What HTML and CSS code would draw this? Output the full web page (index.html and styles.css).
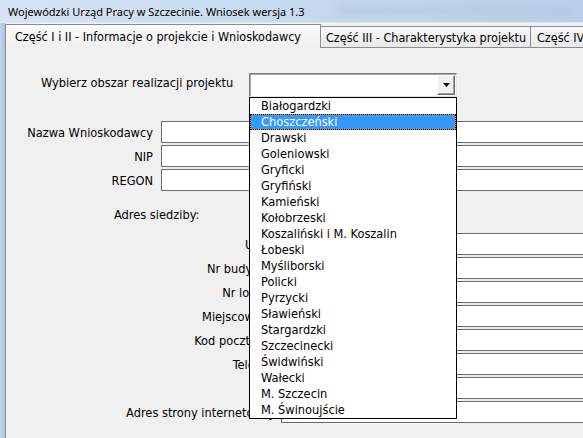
FILE: index.html
```html
<!DOCTYPE html>
<html lang="pl">
<head>
<meta charset="utf-8">
<title>Wniosek</title>
<link rel="stylesheet" href="styles.css">
</head>
<body>
<div class="titlebar"><span class="title">Wojewódzki Urząd Pracy w Szczecinie. Wniosek wersja 1.3</span><span class="glass"></span></div>
<div class="window">
  <div class="frame"></div>
  <div class="client">
    <div class="tabs">
      <div class="tab active">Część I i II - Informacje o projekcie i Wnioskodawcy</div>
      <div class="tab second">Część III - Charakterystyka projektu</div>
      <div class="tab">Część IV - Harmonogram</div>
    </div>
    <div class="panel">
      <div class="area-row">
        <span class="area-label">Wybierz obszar realizacji projektu</span>
        <div class="combo">
          <div class="combo-field"></div>
          <div class="combo-btn"><svg width="7" height="4" viewBox="0 0 7 4"><path d="M0 0H7L3.5 4Z" fill="#000"/></svg></div>
          <ul class="dropdown">
            <li>Białogardzki</li>
            <li class="selected">Choszczeński</li>
            <li>Drawski</li>
            <li>Goleniowski</li>
            <li>Gryficki</li>
            <li>Gryfiński</li>
            <li>Kamieński</li>
            <li>Kołobrzeski</li>
            <li>Koszaliński i M. Koszalin</li>
            <li>Łobeski</li>
            <li>Myśliborski</li>
            <li>Policki</li>
            <li>Pyrzycki</li>
            <li>Sławieński</li>
            <li>Stargardzki</li>
            <li>Szczecinecki</li>
            <li>Świdwiński</li>
            <li>Wałecki</li>
            <li>M. Szczecin</li>
            <li>M. Świnoujście</li>
          </ul>
        </div>
      </div>
      <div class="fields fields-a">
        <span class="lbl">Nazwa Wnioskodawcy</span><div class="txt"></div>
        <span class="lbl">NIP</span><div class="txt"></div>
        <span class="lbl">REGON</span><div class="txt"></div>
      </div>
      <div class="section-title">Adres siedziby:</div>
      <div class="fields fields-b">
        <span class="lbl">Ulica</span><div class="txt"></div>
        <span class="lbl">Nr budynku</span><div class="txt"></div>
        <span class="lbl">Nr lokalu</span><div class="txt"></div>
        <span class="lbl">Miejscowość</span><div class="txt"></div>
        <span class="lbl">Kod pocztowy</span><div class="txt"></div>
        <span class="lbl">Telefon</span><div class="txt"></div>
        <span class="lbl">Fax</span><div class="txt"></div>
        <span class="lbl">Adres strony internetowej</span><div class="txt"></div>
      </div>
    </div>
  </div>
</div>
</body>
</html>
```
FILE: styles.css
```css
* { box-sizing: border-box; }
html, body { margin: 0; padding: 0; }
body {
  width: 583px;
  height: 438px;
  overflow: hidden;
  background: #f0f0f0;
  font-family: "DejaVu Sans Condensed", "DejaVu Sans", sans-serif;
  font-size: 12.7px;
  color: #000;
}
.titlebar {
  height: 23px;
  padding-left: 8px;
  display: flex;
  align-items: center;
  gap: 30px;
  background: linear-gradient(90deg, #d6e4f3 0%, #c9dbef 40%, #b9cfe8 100%);
  border-bottom: 1px solid #dfe9f5;
}
.title {
  font-family: "Noto Sans", sans-serif;
  font-size: 11px;
  color: #000;
  white-space: nowrap;
}
.glass {
  flex: 1;
  height: 8px;
  margin-right: 10px;
  border-radius: 4px;
  background: linear-gradient(90deg, rgba(150,165,185,0.22), rgba(150,165,185,0.1));
  filter: blur(3px);
}
.window {
  display: flex;
  height: 415px;
}
.frame {
  width: 5px;
  flex: none;
  background: linear-gradient(90deg, #c4d6ec, #a9c3e2);
}
.client {
  width: 800px;
  flex: none;
  display: flex;
  flex-direction: column;
  background: #f0f0f0;
}
.tabs {
  height: 24px;
  display: flex;
  align-items: flex-end;
  white-space: nowrap;
}
.tab {
  height: 21px;
  padding: 0 8px 0 6px;
  display: flex;
  align-items: center;
  border: 1px solid #898c95;
  border-bottom: none;
  border-left: none;
  background: linear-gradient(#f8f8f8, #e9e9e9);
  font-size: 12.5px;
  flex: none;
}
.tab.second {
  width: 210px;
  padding-left: 5px;
}
.tab.active {
  width: 316px;
  height: 24px;
  margin-bottom: -1px;
  padding: 0 0 1px 9px;
  border-left: 1px solid #898c95;
  background: linear-gradient(#fbfbfb, #f0f0f0);
  position: relative;
  z-index: 1;
}
.panel {
  flex: 1;
  border-top: 1px solid #898c95;
  border-left: 1px solid #898c95;
  display: flex;
  flex-direction: column;
}
.area-row {
  margin-top: 25px;
  display: flex;
  align-items: flex-start;
}
.area-label {
  width: 243px;
  padding-left: 35px;
  padding-top: 2px;
  line-height: 15px;
  white-space: nowrap;
}
.combo {
  position: relative;
  width: 208px;
  height: 24px;
  display: flex;
  border: 1px solid #7d7d7d;
  border-right-color: #e3e3e3;
  border-bottom-color: #e3e3e3;
  background: #fff;
  box-shadow: inset 1px 1px 0 #a8a8a8;
}
.combo-field { flex: 1; }
.combo-btn {
  width: 18px;
  margin: 1px 1px 1px 0;
  display: flex;
  align-items: center;
  justify-content: center;
  background: #f0f0f0;
  border: 1px solid #fff;
  border-right-color: #696969;
  border-bottom-color: #696969;
  box-shadow: inset -1px -1px 0 #a0a0a0;
}
.dropdown {
  position: absolute;
  left: -1px;
  top: 23px;
  width: 208px;
  margin: 0;
  padding: 0;
  list-style: none;
  background: #fff;
  border: 1px solid #000;
  z-index: 5;
}
.dropdown li {
  height: 16px;
  line-height: 16px;
  padding-left: 11px;
  white-space: nowrap;
}
.dropdown li.selected {
  background: #3399ff;
  color: #fff;
  border: 1px solid #f29a2e;
  outline: 1px dotted #000;
  outline-offset: -1px;
  line-height: 14px;
  padding-left: 10px;
}
.fields {
  display: grid;
  row-gap: 2px;
  column-gap: 8px;
  align-items: center;
}
.fields-a {
  margin-top: 24px;
  grid-template-columns: 147px 1fr;
}
.fields-b {
  grid-template-columns: 267px 1fr;
}
.lbl {
  text-align: right;
  white-space: nowrap;
  line-height: 15px;
}
.txt {
  height: 22px;
  background: #fff;
  border: 1px solid #6b6b6b;
}
.section-title {
  height: 42px;
  padding-left: 108px;
  padding-top: 16px;
  line-height: 15px;
}
```
